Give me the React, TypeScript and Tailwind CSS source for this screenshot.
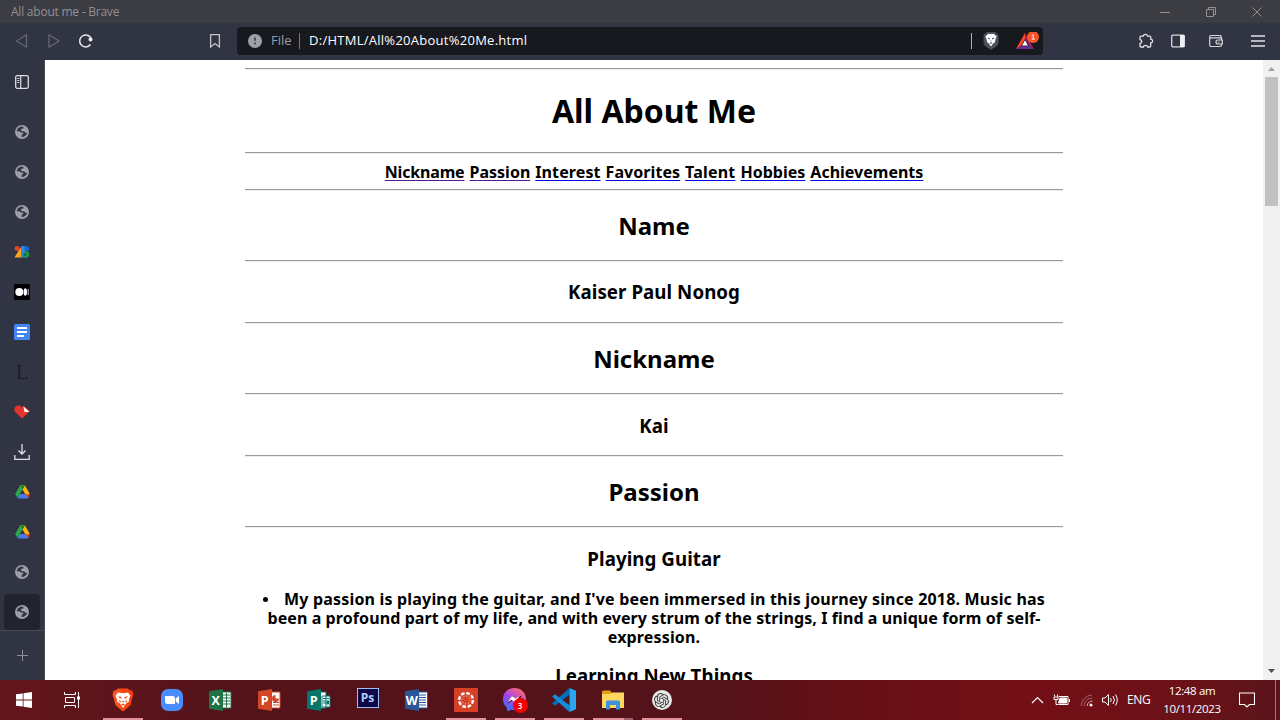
import type { ReactNode } from "react";
import { SiOpenai, SiMessenger } from "react-icons/si";

function Globe() {
  return (
    <svg width="14" height="14" viewBox="0 0 14 14">
      <circle cx="7" cy="7" r="7" fill="#9da0a8" />
      <path
        d="M5.5 1.700C3.500 2.300 2 4 1.800 6.300l2.800.1 1.700 1.100 1.600.2.600 1-1.700 1.100-.2 2.100c2.700.1 5-1.500 5.600-4.200l-1.700 0-1.400-1.300-2-.1-1.300-1 .5-1.500 2.100-.3.300-.9C7.600 1.600 6.500 1.500 5.500 1.700z"
        fill="#313442"
      />
    </svg>
  );
}

function Drive() {
  return (
    <svg width="15" height="14" viewBox="0 0 15 14">
      <path d="M5 0.500h5L5 9 2.700 13.200 0.200 9z" fill="#2da44e" />
      <path d="M5 0.500h5l4.800 8.500H10z" fill="#fbb70d" />
      <path d="M5 9h9.800l-2.300 4.500H2.600z" fill="#3f7ff0" />
      <path d="M10.300 9h4.500l-2.300 4.500z" fill="#e5452f" />
      <path d="M5 .5h5L7.500 4.700z" fill="#15803c" />
      <path d="M7.500 4.700 10 9H5z" fill="#313442" />
    </svg>
  );
}

function SideTab({ children, active = false }: { children: ReactNode; active?: boolean }) {
  return (
    <div
      className={
        active
          ? "my-0.5 ml-1 flex h-9 w-9 shrink-0 items-center justify-center rounded-sm bg-[#21232d]"
          : "my-0.5 ml-1 flex h-9 w-9 shrink-0 items-center justify-center"
      }
    >
      {children}
    </div>
  );
}

function Rule() {
  return <hr className="h-0.5 border-0 border-t border-b border-t-[#9a9a9a] border-b-[#eeeeee]" />;
}

function H2({ children }: { children: ReactNode }) {
  return <h2 className="py-[19.92px] text-[24px] leading-[29px] font-bold">{children}</h2>;
}

function H3({ children }: { children: ReactNode }) {
  return <h3 className="pt-[18.72px] text-[18.72px] leading-[23px] font-bold tracking-[0.06px]">{children}</h3>;
}

function Page() {
  return (
    <main className="flex min-w-0 flex-1 justify-center overflow-hidden bg-white">
      <div className="w-[818px] shrink-0 pt-2 text-center font-['Noto_Sans',sans-serif] whitespace-nowrap text-black">
        <Rule />
        <h1 className="py-[21.44px] text-[32px] leading-[39px] font-bold">All About Me</h1>
        <Rule />
        <nav className="flex justify-center gap-[5px] pt-[9px] pb-[7px] text-[16px] leading-[19px] font-bold">
          <a className="tracking-[-0.16px] underline decoration-[#551a8b] decoration-1 underline-offset-2">Nickname</a>
          <a className="underline decoration-[#551a8b] decoration-1 underline-offset-2">Passion</a>
          <a className="tracking-[0.1px] underline decoration-[#0000ee] decoration-1 underline-offset-2">Interest</a>
          <a className="tracking-[0.06px] underline decoration-[#0000ee] decoration-1 underline-offset-2">Favorites</a>
          <a className="tracking-[0.2px] underline decoration-[#0000ee] decoration-1 underline-offset-2">Talent</a>
          <a className="underline decoration-[#0000ee] decoration-1 underline-offset-2">Hobbies</a>
          <a className="underline decoration-[#0000ee] decoration-1 underline-offset-2">Achievements</a>
        </nav>
        <Rule />
        <H2>Name</H2>
        <Rule />
        <H3>Kaiser Paul Nonog</H3>
        <div className="h-[18.72px]" />
        <Rule />
        <H2>Nickname</H2>
        <Rule />
        <H3>Kai</H3>
        <div className="h-[18.72px]" />
        <Rule />
        <H2>Passion</H2>
        <Rule />
        <H3>Playing Guitar</H3>
        <div className="-mb-px flex flex-col items-center pt-[19.72px] text-[16px] leading-[19px] font-bold">
          <div className="flex items-center gap-4 tracking-[0.183px]">
            <span className="h-[5px] w-[5px] rounded-full bg-black" />
            <span>My passion is playing the guitar, and I've been immersed in this journey since 2018. Music has</span>
          </div>
          <span className="tracking-[0.09px]">
            been a profound part of my life, and with every strum of the strings, I find a unique form of self-
          </span>
          <span className="tracking-[0.15px]">expression.</span>
        </div>
        <H3>Learning New Things</H3>
      </div>
    </main>
  );
}

function TitleBar() {
  return (
    <header className="flex h-[23px] shrink-0 items-center bg-[#3c3c43] pr-[17px] pl-[11px] text-[12px] text-[#929297]">
      <span className="flex-1 tracking-[-0.23px]">All about me - Brave</span>
      <svg width="104" height="12" viewBox="0 0 104 12" fill="none" stroke="#929297">
        <path d="M1 6.500h10M47.500 3.500h7v7h-7zM49.500 3.500v-2h7v7h-2M93.500 1.500l9 9M102.500 1.500l-9 9" />
      </svg>
    </header>
  );
}

function Toolbar() {
  return (
    <div className="flex h-[37px] shrink-0 items-center bg-[#313442] pb-px pl-[15px]">
      <svg width="80" height="16" viewBox="0 0 80 16" fill="none">
        <path d="M1.500 8 11.500 1.800v12.400z" stroke="#646774" strokeWidth="1.300" strokeLinejoin="round" />
        <path d="M34 1.800v12.400L44 8z" stroke="#646774" strokeWidth="1.300" strokeLinejoin="round" />
        <path d="M75.500 11.500a6 6 0 1 1 1-5" stroke="#e4e4e8" strokeWidth="1.500" />
        <circle cx="75.500" cy="6.500" r="2" fill="#f4f4f6" />
      </svg>
      <svg className="ml-[114px]" width="12" height="16" viewBox="0 0 12 16" fill="none">
        <path d="M1.600 1.700h8.800v12.200L6 10.600l-4.400 3.300z" stroke="#c4c5cb" strokeWidth="1.300" />
      </svg>
      <div className="ml-4 flex h-7 w-[806px] items-center rounded bg-[#17191f] pl-[11px] text-[13px]">
        <svg width="14" height="14" viewBox="0 0 14 14">
          <circle cx="7" cy="7" r="7" fill="#9da0a8" />
          <path d="M6.200 3.500h1.700v3.200H6.200zM6.200 8.500h1.700v1.800H6.200z" fill="#3a3d46" />
        </svg>
        <span className="ml-[9px] w-[28px] text-[#9a9da6]">File</span>
        <span className="h-4 w-px bg-[#777983]" />
        <span className="ml-[9px] w-[662px] tracking-[0.27px] text-white">D:/HTML/All%20About%20Me.html</span>
        <span className="h-4 w-px bg-[#aaacb2]" />
        <svg className="ml-[11px]" width="16" height="18" viewBox="0 0 16 18">
          <path d="M4 0h8l3.500 3v7c0 4-4 5.500-7.500 8C4.500 15.500.5 14 .5 10V3z" fill="#4c4f5d" />
          <path
            d="M5 2h6l2.700 2.600-1 2-1 4-1.500.8L8 14.500 5.800 11.400l-1.500-.8-1-4-1-2z"
            fill="#fff"
          />
          <path d="M4.800 5.600l2.200.6v1.300L5 6.800zM11.200 5.600 9 6.200v1.300l2-.7zM7.200 8.500h1.600L8 9.600zM6.200 11l1.800-.8 1.800.8L8 12z" fill="#555866" />
        </svg>
        <svg className="ml-[17px]" width="24" height="18" viewBox="0 0 24 18">
          <path d="M9 1 0 17l4.500-2.500L9 7z" fill="#ff4724" />
          <path d="M9 1v6l4.500 7.500L18 17z" fill="#9e1f63" />
          <path d="M0 17h18l-4.500-3h-9z" fill="#662d91" />
          <path d="M9 8.200 12 13.500H6z" fill="#fff" />
          <circle cx="17" cy="5" r="6" fill="#fb542b" />
          <path d="M15.700 3.700 17.200 2.600v4.600M15.700 7.200h3" stroke="#fff" fill="none" strokeWidth=".9" />
        </svg>
      </div>
      <svg className="ml-[95px]" width="16" height="16" viewBox="0 0 16 16" fill="none">
        <path
          d="M2 4.200Q2 3.200 3 3.200h2.300C5.600 0.800 9.200 0.800 9.500 3.200h2.200q1 0 1 1v2c2.600.2 2.600 3.600 0 3.800v3q0 1-1 1H9.600c-.5-2.200-3.700-2.200-4.200 0H3q-1 0-1-1v-2.500c2.300-.5 2.300-3.500 0-4z"
          stroke="#e2e2e6"
          strokeWidth="1.300"
        />
      </svg>
      <svg className="ml-[16px]" width="16" height="14" viewBox="0 0 16 14">
        <rect x="1.700" y="1.200" width="12.600" height="11.600" rx="1.200" fill="none" stroke="#d8d8dc" strokeWidth="1.300" />
        <path d="M10 1h4.500v12H10z" fill="#f0f0f2" />
      </svg>
      <svg className="ml-[22px]" width="16" height="14" viewBox="0 0 16 14" fill="none" stroke="#d8d8dc" strokeWidth="1.200">
        <path d="M13 4V2.500q0-1-1-1H3q-1.300 0-1.300 1.400v8q0 1.600 1.600 1.600h8.700q1.500 0 1.500-1.500v-1M2 3.800h11.500v2M14.300 6H10q-2 0-2 2t2 2h4.300zM10 8h1.500" />
      </svg>
      <svg className="ml-[26px]" width="16" height="14" viewBox="0 0 16 14">
        <path d="M1 2h14M1 7h14M1 12h14" stroke="#e2e2e6" strokeWidth="1.300" />
      </svg>
    </div>
  );
}

function Sidebar() {
  return (
    <aside className="flex w-[45px] shrink-0 flex-col border-r border-[#464956] bg-[#313442]">
      <div className="flex h-[44px] shrink-0 justify-center pt-[15px]">
        <svg width="14" height="14" viewBox="0 0 14 14" fill="none" stroke="#dedee2">
          <rect x=".7" y=".7" width="12.600" height="12.600" rx="1.500" strokeWidth="1.300" />
          <path d="M5.700 1v12" strokeWidth="1.200" />
          <path d="M2.300 3.500h2M2.300 5.500h2M2.300 7.500h2" />
        </svg>
      </div>
      <div className="flex flex-col pt-[8px]">
        <SideTab><Globe /></SideTab>
        <SideTab><Globe /></SideTab>
        <SideTab><Globe /></SideTab>
        <SideTab>
          <svg width="16" height="12" viewBox="0 0 16 12">
            <circle cx="3" cy="2.500" r="2.400" fill="#ea4335" />
            <path d="M7.500 0v11.500H.5z" fill="#f9a51a" />
            <path d="M7.500 0h3.500v11.500H7.500z" fill="#2f86f5" />
            <path d="M10.500 0h2a2.700 2.700 0 0 1 0 5.400h-2z" fill="#1a66d0" />
            <circle cx="12" cy="8.500" r="3.200" fill="#1e9e44" />
            <circle cx="11" cy="8.500" r="1.500" fill="#10703c" />
          </svg>
        </SideTab>
        <SideTab>
          <svg width="16" height="16" viewBox="0 0 16 16">
            <rect width="16" height="16" rx="1" fill="#000" />
            <circle cx="5.300" cy="8" r="4" fill="#fff" />
            <ellipse cx="11.300" cy="8" rx="1.700" ry="3.700" fill="#fff" />
            <path d="M14.200 4.800v6.400" stroke="#ccc" />
          </svg>
        </SideTab>
        <SideTab>
          <svg width="16" height="16" viewBox="0 0 16 16">
            <rect width="16" height="16" rx="1.500" fill="#4285f4" />
            <path d="M3 4h10M3 8h10M3 12h7" stroke="#fff" strokeWidth="2" />
          </svg>
        </SideTab>
        <SideTab>
          <span className="font-['Liberation_Serif',serif] text-[20px] leading-none text-[#1d1e24]">L</span>
        </SideTab>
        <SideTab>
          <svg width="16" height="14" viewBox="0 0 16 14">
            <path d="M8 13.500 1.200 7C-2 2.500 4-2 8 2.200 11-1 15 .5 15.500 4.500L15 7z" fill="#e5322d" />
            <path d="M9.500 1.500 15.500 7h-5z" fill="#fff" />
            <path d="M10 1 10 0h6v6z" fill="#313442" />
          </svg>
        </SideTab>
        <SideTab>
          <svg width="16" height="16" viewBox="0 0 16 16" fill="none" stroke="#dedee2" strokeWidth="1.300">
            <path d="M8 0v10M4.500 6.500 8 10l3.500-3.500M.8 11v4.300h14.400V11" />
          </svg>
        </SideTab>
        <SideTab><Drive /></SideTab>
        <SideTab><Drive /></SideTab>
        <SideTab><Globe /></SideTab>
        <SideTab active><Globe /></SideTab>
      </div>
      <div className="-mt-[2px] flex flex-1 justify-center border-t border-[#464956] pt-[19px]">
        <svg width="11" height="11" viewBox="0 0 11 11" stroke="#8b8e98">
          <path d="M0 5.500h11M5.500 0v11" />
        </svg>
      </div>
    </aside>
  );
}

function Scrollbar() {
  return (
    <div className="flex w-[17px] shrink-0 flex-col items-center bg-[#f1f1f1]">
      <svg className="shrink-0" width="17" height="17" viewBox="0 0 17 17"><path d="M5 11h7L8.500 7z" fill="#a3a3a3" /></svg>
      <div className="h-[129px] w-[13px] bg-[#c1c1c1]" />
      <div className="flex-1" />
      <svg className="shrink-0" width="17" height="17" viewBox="0 0 17 17"><path d="M5 6h7l-3.500 4z" fill="#505050" /></svg>
    </div>
  );
}

function Task({ children, open = false }: { children: ReactNode; open?: boolean }) {
  return (
    <div className="flex w-[49px] shrink-0 flex-col items-center">
      <div className="flex h-[38px] items-center justify-center pt-0.5">{children}</div>
      {open && <div className="h-0.5 w-10 bg-[#e0919a]" />}
    </div>
  );
}

function Office({ letter, color, children }: { letter: string; color: string; children: ReactNode }) {
  return (
    <svg width="24" height="24" viewBox="0 0 24 24">
      {children}
      <path d="M0 3.300 14 1v22L0 20.700z" fill={color} />
      <text x="6.700" y="16.500" textAnchor="middle" fontSize="12.500" fontWeight="700" fontFamily="Open Sans, sans-serif" fill="#fff">
        {letter}
      </text>
    </svg>
  );
}

function Taskbar() {
  return (
    <footer className="flex h-10 shrink-0 bg-[linear-gradient(90deg,#63161c_0%,#54131a_18%,#54131a_56%,#650f16_66%,#740f16_80%,#6c1118_92%,#5a141b_100%)]">
      <div className="-ml-px">
        <Task>
          <svg width="16" height="16" viewBox="0 0 16 16" fill="#fff">
            <path d="M0 2.300 6.700 1.400v6.200H0zM7.500 1.300 16 0v7.600H7.500zM0 8.400h6.700v6.200L0 13.700zM7.500 8.400H16V16l-8.500-1.200z" />
          </svg>
        </Task>
      </div>
      <Task>
        <svg width="17" height="16" viewBox="0 0 17 16" fill="none" stroke="#fff">
          <path d="M.5 0v2.500h11V0M1.500 5.500h9v5h-9zM.5 16v-2.500h11V16M14.500 0v16" />
          <path d="M13 4.500h3v3h-3z" fill="#fff" stroke="none" />
        </svg>
      </Task>
      <div className="ml-[1px] flex">
        <Task open>
          <svg width="22" height="24" viewBox="0 0 22 24">
            <defs>
              <linearGradient id="lion" x1="0" x2="1">
                <stop stopColor="#ff5a1f" />
                <stop offset="1" stopColor="#f2380d" />
              </linearGradient>
            </defs>
            <path d="M6 .5h10l2 2 2-.2 1.500 4-1 3-2 8L11 23.500 3.500 17.300l-2-8-1-3 1.500-4 2 .2z" fill="url(#lion)" />
            <path d="M6 4.500 11 5.300 16 4.500l2.500 3.300-1.700 3.700.3 2-3.300 2.200L11 20l-2.800-4.300-3.300-2.200.3-2-1.700-3.700z" fill="#fff" />
            <path d="M6 8.300l3.300.6.3 1.500-2-.2zM16 8.300l-3.300.6-.3 1.500 2-.2zM7 11.500l2.200 2.300-1.500 1zM15 11.500l-2.200 2.300 1.500 1zM9.500 13h3L11 14.500zM9 16.500l2-1 2 1-2 1.300z" fill="#fb4a18" />
          </svg>
        </Task>
        <Task>
          <svg width="24" height="24" viewBox="0 0 24 24">
            <rect x="1" y="1" width="22" height="22" rx="7" fill="#4a8cff" />
            <path d="M5 8h7.500q2.500 0 2.500 2.500V16H7.500Q5 16 5 13.500zM15.700 10.500 19 8v8l-3.300-2.500z" fill="#fff" />
          </svg>
        </Task>
        <Task>
          <Office letter="X" color="#207346">
            <path d="M13 4h9v16h-9z" fill="#fff" stroke="#207346" />
            <path d="M14 7h7M14 10h7M14 13h7M14 16h7M17.500 5v14" stroke="#207346" />
          </Office>
        </Task>
        <Task>
          <Office letter="P" color="#d24625">
            <path d="M13 4h9v16h-9z" fill="#fff" stroke="#d24625" />
            <path d="M15 14.500h6M15 17h6" stroke="#d24625" />
            <path d="M17.500 7v3.500H21a3.500 3.500 0 1 1-3.500-3.500z" fill="#d24625" />
          </Office>
        </Task>
        <Task>
          <Office letter="P" color="#077568">
            <path d="M13 4h6v16h-6zM15 8h8v11h-8z" fill="#fff" stroke="#077568" />
            <path d="M16 10.500h6M16 13h3M16 15h3" stroke="#077568" />
            <path d="M19.500 12.500h2.500v4h-2.500z" fill="#077568" />
          </Office>
        </Task>
        <Task>
          <div className="mb-1 flex h-5 w-[22px] items-center justify-center border border-[#9fc3f0] bg-[#10074a] text-[12px] leading-none font-bold text-[#a8cff5]">
            Ps
          </div>
        </Task>
        <Task>
          <Office letter="W" color="#2a5699">
            <path d="M13 4h9.500v16H13z" fill="#fff" stroke="#2a5699" />
            <path d="M14 7h7M14 9.500h7M14 12h7M14 14.500h7M14 17h7" stroke="#2a5699" />
          </Office>
        </Task>
        <Task open>
          <svg width="24" height="24" viewBox="0 0 24 24">
            <path d="M0 0h24v24H0z" fill="#d64027" />
            <circle cx="12" cy="12" r="6.900" fill="none" stroke="#fff" strokeWidth="2.400" strokeDasharray="3.700 1.720" />
            <circle cx="12" cy="12" r="4" fill="none" stroke="#fff" strokeWidth=".9" strokeDasharray="1 2.140" />
          </svg>
        </Task>
        <Task open>
          <div className="relative h-6 w-6">
            <svg width="23" height="23" viewBox="0 0 24 24">
              <defs>
                <linearGradient id="msg" x1="0" y1="1" x2=".7" y2="0">
                  <stop stopColor="#1184ff" />
                  <stop offset=".5" stopColor="#9a44f5" />
                  <stop offset="1" stopColor="#ff6574" />
                </linearGradient>
              </defs>
              <SiMessenger size={24} fill="url(#msg)" />
              <path d="m4.900 15 3.500-5.600q.9-1.300 2.300-.4l2.700 2 3.900-2.500-3.800 5.500q-.8 1-2 .2l-2.800-2z" fill="#fff" />
            </svg>
            <span className="absolute top-[10px] left-[10px] flex h-[15px] w-[15px] items-center justify-center rounded-full bg-[#f80000] text-[8px] font-semibold text-white">
              3
            </span>
          </div>
        </Task>
        <Task open>
          <svg width="24" height="24" viewBox="0 0 24 24">
            <path d="M17.500 0v6.800L3 17.800 0 15.500z" fill="#0070b8" />
            <path d="M17.500 24v-6.800L3 6.200 0 8.500z" fill="#148bd6" />
            <path d="M17.500 0 24 2.800v18.400L17.500 24z" fill="#2aa7f2" />
          </svg>
        </Task>
        <div className="relative">
          <Task open>
            <svg width="22" height="20" viewBox="0 0 22 20">
              <path d="M0 2q0-1.500 1.500-1.500H8L10 3h12v5H0z" fill="#e1a110" />
              <path d="M0 4h8.500L10 2.500h12V18H0z" fill="#ffd75f" />
              <path d="M4 19.500V12q0-1.500 1.500-1.500h11q1.500 0 1.500 1.500v7.500h-4V15H8v4.500z" fill="#3a93dc" />
            </svg>
          </Task>
          <span className="absolute bottom-0 left-[36px] h-0.5 w-[9px] bg-[#9a6269]" />
        </div>
        <Task open>
          <div className="flex h-5 w-5 items-center justify-center rounded-full bg-[#e8e8e8] text-[#3c3c3c]">
            <SiOpenai size={15} />
          </div>
        </Task>
      </div>
      <div className="flex-1" />
      <div className="flex items-center text-[12px] text-white">
        <svg width="88" height="18" viewBox="0 0 88 18" fill="none" stroke="#fff">
          <path d="m1 12 5.500-5.500L12 12" strokeWidth="1.200" />
          <path d="M27.500 5.500h9.500v8h-9.500M38.500 8v3" />
          <path d="M29 7h6.500v5H27.500z" fill="#fff" />
          <path d="M23.500 3.500v2M26.500 3.500v2M23 6h4v2.500h-4zM25 8.500v5h2" />
          <g>
            <path d="M50 15A11.500 11.500 0 0 1 61 4M53 15a8 8 0 0 1 8-8" stroke="#a3636a" />
            <path d="M56 15a6 6 0 0 1 5.500-5" stroke="#d5afb3" />
            <circle cx="60" cy="14" r="1.500" fill="#fff" stroke="none" />
          </g>
          <path d="M71.500 7h2.500l3.500-3.500v11L74 11h-2.500zM79.500 7q1.500 2 0 4M82 5q2.800 4 0 8M84.500 3.500q3.500 5.500 0 11" />
        </svg>
        <span className="ml-2 w-9 tracking-[-0.3px]">ENG</span>
        <div className="flex w-[58px] flex-col items-center text-[11.500px] leading-[18px] tracking-[-0.35px]">
          <span>12:48 am</span>
          <span>10/11/2023</span>
        </div>
        <svg className="ml-[18px]" width="16" height="16" viewBox="0 0 16 16" fill="none" stroke="#fff">
          <path d="M.5 1h15v11.500h-5L8 15l-2.500-2.500h-5z" strokeWidth="1.100" />
        </svg>
        <span className="ml-5 h-full w-px bg-[#a27479]" />
        <span className="w-1" />
      </div>
    </footer>
  );
}

export default function App() {
  return (
    <div className="flex h-[720px] w-[1280px] flex-col overflow-hidden font-['Open_Sans',sans-serif]">
      <TitleBar />
      <Toolbar />
      <div className="flex min-h-0 flex-1">
        <Sidebar />
        <Page />
        <Scrollbar />
      </div>
      <Taskbar />
    </div>
  );
}
